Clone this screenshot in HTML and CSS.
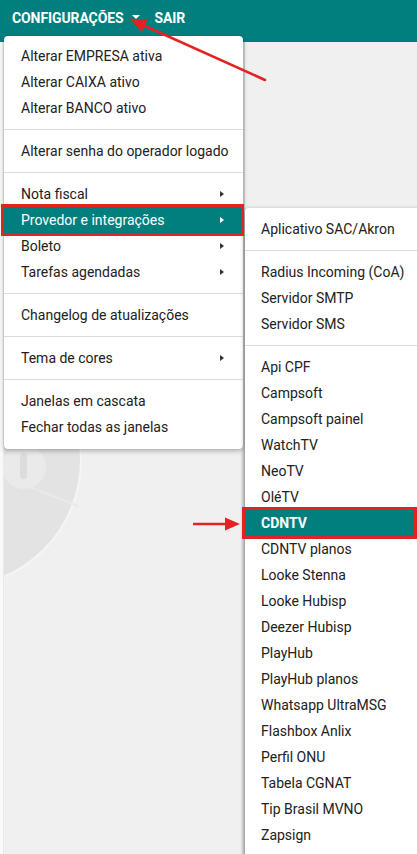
FILE: index.html
```html
<!DOCTYPE html>
<html lang="pt-BR">
<head>
<meta charset="utf-8">
<title>Configurações</title>
<link rel="stylesheet" href="styles.css">
</head>
<body>
<div class="page">
  <header class="topbar">
    <span class="nav-item">CONFIGURAÇÕES<span class="caret"></span></span>
    <span class="nav-item">SAIR</span>
  </header>
  <main class="desk">
    <svg class="watermark" width="200" height="320" viewBox="0 0 200 320">
      <circle cx="-46" cy="130" r="128" fill="#f5f5f5"/>
      <circle cx="-46" cy="130" r="126" fill="#e3e3e3"/>
      <path d="M0 145 L78 176" stroke="#e9e9e9" stroke-width="2" fill="none"/>
      <circle cx="24" cy="137" r="22" fill="#eaeaea"/>
      <rect x="20" y="123" width="7" height="26" rx="3.5" fill="#dcdcdc"/>
    </svg>
    <div class="edge-left"></div>
    <div class="edge-mid"></div>
  </main>

  <nav class="menu main-menu">
    <div class="item">Alterar EMPRESA ativa</div>
    <div class="item">Alterar CAIXA ativo</div>
    <div class="item">Alterar BANCO ativo</div>
    <div class="sep"></div>
    <div class="item">Alterar senha do operador logado</div>
    <div class="sep"></div>
    <div class="item has-sub">Nota fiscal<span class="arrow"></span></div>
    <div class="item has-sub active">Provedor e integrações<span class="arrow"></span></div>
    <div class="item has-sub">Boleto<span class="arrow"></span></div>
    <div class="item has-sub">Tarefas agendadas<span class="arrow"></span></div>
    <div class="sep"></div>
    <div class="item">Changelog de atualizações</div>
    <div class="sep"></div>
    <div class="item has-sub">Tema de cores<span class="arrow"></span></div>
    <div class="sep"></div>
    <div class="item">Janelas em cascata</div>
    <div class="item">Fechar todas as janelas</div>
  </nav>

  <nav class="menu sub-menu">
    <div class="item">Aplicativo SAC/Akron</div>
    <div class="sep"></div>
    <div class="item">Radius Incoming (CoA)</div>
    <div class="item">Servidor SMTP</div>
    <div class="item">Servidor SMS</div>
    <div class="sep"></div>
    <div class="item">Api CPF</div>
    <div class="item">Campsoft</div>
    <div class="item">Campsoft painel</div>
    <div class="item">WatchTV</div>
    <div class="item">NeoTV</div>
    <div class="item">OléTV</div>
    <div class="item active strong">CDNTV</div>
    <div class="item">CDNTV planos</div>
    <div class="item">Looke Stenna</div>
    <div class="item">Looke Hubisp</div>
    <div class="item">Deezer Hubisp</div>
    <div class="item">PlayHub</div>
    <div class="item">PlayHub planos</div>
    <div class="item">Whatsapp UltraMSG</div>
    <div class="item">Flashbox Anlix</div>
    <div class="item">Perfil ONU</div>
    <div class="item">Tabela CGNAT</div>
    <div class="item">Tip Brasil MVNO</div>
    <div class="item">Zapsign</div>
  </nav>

  <div class="mark mark-provedor"></div>
  <div class="mark mark-cdntv"></div>

  <svg class="annot" width="417" height="854" viewBox="0 0 417 854">
    <line x1="265" y1="80" x2="144" y2="25.5" stroke="#e32222" stroke-width="2.6" stroke-linecap="round"/>
    <polygon points="129,18.5 147.5,19.5 142,32" fill="#e32222"/>
    <line x1="193" y1="524" x2="227" y2="524" stroke="#e32222" stroke-width="2.6"/>
    <polygon points="240,524 225,517.5 225,530.5" fill="#e32222"/>
  </svg>
</div>
</body>
</html>
```
FILE: styles.css
```css
* { box-sizing: border-box; }
html, body {
  margin: 0;
  padding: 0;
  width: 417px;
  height: 854px;
  overflow: hidden;
}
body {
  font-family: Roboto, "Liberation Sans", Arial, sans-serif;
  background: #f0f0f0;
  color: #212121;
}
.page {
  position: relative;
  width: 417px;
  height: 854px;
  overflow: hidden;
  display: flex;
  flex-direction: column;
}
.topbar {
  height: 42px;
  flex: none;
  background: #017f7e;
  display: flex;
  align-items: flex-start;
  gap: 15px;
  padding-left: 12px;
}
.nav-item {
  color: #fff;
  font-weight: 700;
  font-size: 14px;
  line-height: 36px;
  display: flex;
  align-items: center;
  letter-spacing: -0.1px;
}
.caret {
  width: 0;
  height: 0;
  margin-left: 8px;
  margin-top: -3px;
  border-top: 4px solid #fff;
  border-left: 4px solid transparent;
  border-right: 4px solid transparent;
}
.desk {
  flex: 1;
  position: relative;
  background: #f0f0f0;
}
.watermark {
  position: absolute;
  left: 0;
  top: 288px;
}
.edge-left {
  position: absolute;
  left: 0;
  top: 0;
  bottom: 0;
  width: 4px;
  background: #f9f9f9;
  border-right: 1px solid #e9e9e9;
}
.edge-mid {
  position: absolute;
  left: 241px;
  top: 0;
  bottom: 0;
  width: 4px;
  background: linear-gradient(to right, #ececec, #c9c9c9);
}
.menu {
  position: absolute;
  background: #fff;
  display: flex;
  flex-direction: column;
  font-size: 14px;
}
.main-menu {
  left: 4px;
  top: 36px;
  width: 239px;
  padding: 7px 0 9px;
  border-radius: 4px;
  box-shadow: 0 2px 5px rgba(0,0,0,0.28), 0 0 1px rgba(0,0,0,0.2);
}
.sub-menu {
  left: 245px;
  top: 208px;
  width: 190px;
  padding: 8px 0 40px;
  border-radius: 4px 0 0 4px;
  box-shadow: -1px 1px 4px rgba(0,0,0,0.3);
}
.item {
  height: 26px;
  line-height: 26px;
  padding-left: 17px;
  white-space: nowrap;
  display: flex;
  align-items: center;
}
.sub-menu .item { padding-left: 16px; }
.item.has-sub { justify-content: space-between; padding-right: 19px; }
.arrow {
  width: 0;
  height: 0;
  border-left: 4px solid #333;
  border-top: 3.5px solid transparent;
  border-bottom: 3.5px solid transparent;
}
.item.active {
  background: #017f7e;
  color: #fff;
}
.item.active .arrow { border-left-color: #fff; }
.item.strong { font-weight: 700; }
.sep {
  height: 1px;
  margin: 8px 0;
  background: #dcdcdc;
}
.mark {
  position: absolute;
  border: 3px solid #e32222;
}
.mark-provedor {
  left: 1px;
  top: 204px;
  width: 243px;
  height: 32px;
}
.mark-cdntv {
  left: 242px;
  top: 507px;
  width: 175px;
  height: 32px;
}
.annot {
  position: absolute;
  left: 0;
  top: 0;
  pointer-events: none;
}
```
